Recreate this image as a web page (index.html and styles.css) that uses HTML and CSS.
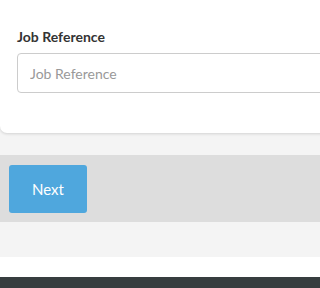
FILE: index.html
```html
<!DOCTYPE html>
<html>
<head>
<meta charset="utf-8">
<meta name="viewport" content="width=288">
<link rel="stylesheet" href="styles.css">
</head>
<body>
<div class="page">
  <div class="card">
    <label class="field-label" for="jobref">Job Reference</label>
    <input id="jobref" class="field-input" type="text" placeholder="Job Reference">
  </div>
  <div class="actions">
    <button class="btn-next" type="button">Next</button>
  </div>
  <div class="spacer"></div>
  <div class="white-strip"></div>
  <div class="footer"></div>
</div>
</body>
</html>
```
FILE: styles.css
```css
html, body {
  margin: 0;
  padding: 0;
  background: #f4f4f4;
  overflow: hidden;
  font-family: Lato, "Liberation Sans", sans-serif;
}
.page {
  width: 100%;
  overflow: hidden;
  display: flex;
  flex-direction: column;
}
.card {
  width: calc(100% + 40px);
  flex: none;
  box-sizing: border-box;
  background: #fff;
  border-radius: 0 0 0 7px;
  box-shadow: 0 1px 3px rgba(0,0,0,0.14);
  padding: 28px 17px 40px 17px;
  display: flex;
  flex-direction: column;
}
.field-label {
  font-weight: 700;
  font-size: 14px;
  line-height: 18px;
  color: #333;
  margin-bottom: 7px;
}
.field-input {
  height: 40px;
  box-sizing: border-box;
  border: 1px solid #ccc;
  border-radius: 4px;
  padding: 0 12px;
  font-family: Lato, "Liberation Sans", sans-serif;
  font-size: 14px;
  color: #333;
  background: #fff;
  outline: none;
}
.field-input::placeholder {
  color: #999;
}
.actions {
  margin-top: 22px;
  background: #dddddd;
  padding: 10px 9px 9px;
  display: flex;
}
.btn-next {
  width: 78px;
  height: 48px;
  border: none;
  border-radius: 3px;
  background: #4fa7dd;
  color: #fff;
  font-family: Lato, "Liberation Sans", sans-serif;
  font-size: 15px;
  padding: 0;
}
.spacer {
  height: 35px;
}
.white-strip {
  height: 20px;
  background: #fff;
}
.footer {
  height: 20px;
  background: #373d3f;
}
```
